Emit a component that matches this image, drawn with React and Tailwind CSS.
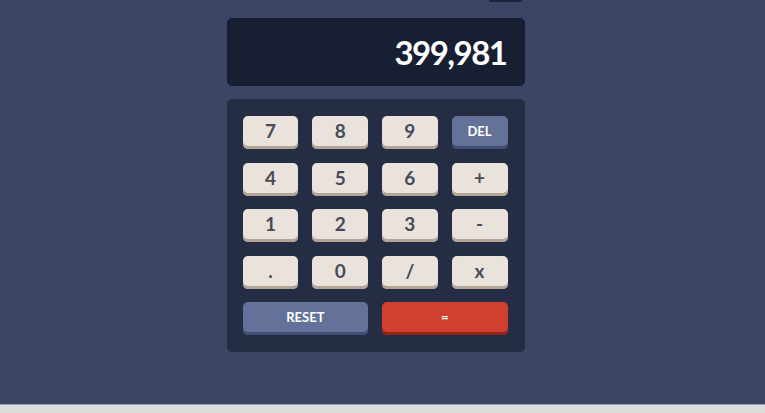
// Calculator — keypad grid + display screen, dark navy theme
const KEYS = ["7", "8", "9", "DEL", "4", "5", "6", "+", "1", "2", "3", "-", ".", "0", "/", "x"];

function Key({ label }) {
  const isDel = label === "DEL";
  return (
    <button
      className={
        isDel
          ? "flex h-[33px] items-center justify-center rounded-[5px] bg-[#647198] pb-[2px] text-[13px] font-bold text-white shadow-[inset_0_-3px_0_#414e73]"
          : "flex h-[33px] items-center justify-center rounded-[5px] bg-[#eae3dc] pb-[2px] text-[19px] font-bold text-[#444b5a] shadow-[inset_0_-3px_0_#b3a497]"
      }
    >
      {label}
    </button>
  );
}

export default function App() {
  return (
    <div className="flex h-[413px] flex-col bg-[#3b4664] font-['Lato',sans-serif]">
      <div className="flex flex-1 flex-col items-center pr-[14px]">
        {/* cut-off theme toggle peeking from above */}
        <div className="flex h-[2px] w-[298px] justify-end pr-[3px]">
          <div className="h-[2px] w-[33px] rounded-b-[2px] bg-[#1e2438]" />
        </div>

        {/* SCREEN */}
        <div className="mt-4 flex h-[68px] w-[298px] items-center justify-end rounded-[5px] bg-[#181f33] px-[18px] pt-[1px]">
          <span className="text-[33px] font-bold tracking-[-1.5px] text-white">399,981</span>
        </div>

        {/* KEYPAD */}
        <div className="mt-[13px] w-[298px] rounded-[5px] bg-[#242d44] pb-[17px] pl-4 pr-[17px] pt-[17px]">
          <div className="grid grid-cols-4 gap-x-[13.7px] gap-y-[13.5px]">
            {KEYS.map((k) => (
              <Key key={k} label={k} />
            ))}
            <button className="col-span-2 flex h-[33px] items-center justify-center rounded-[5px] bg-[#647198] pb-[2px] text-[13px] font-bold text-white shadow-[inset_0_-3px_0_#414e73]">
              RESET
            </button>
            <button className="col-span-2 flex h-[33px] items-center justify-center rounded-[5px] bg-[#d03f2f] pb-[2px] text-[13px] font-bold text-white shadow-[inset_0_-3px_0_#93261a]">
              =
            </button>
          </div>
        </div>
      </div>

      {/* bottom browser strip */}
      <div className="h-[9px] border-t border-[#9a9fb5] bg-[#dcdcdc]" />
    </div>
  );
}
